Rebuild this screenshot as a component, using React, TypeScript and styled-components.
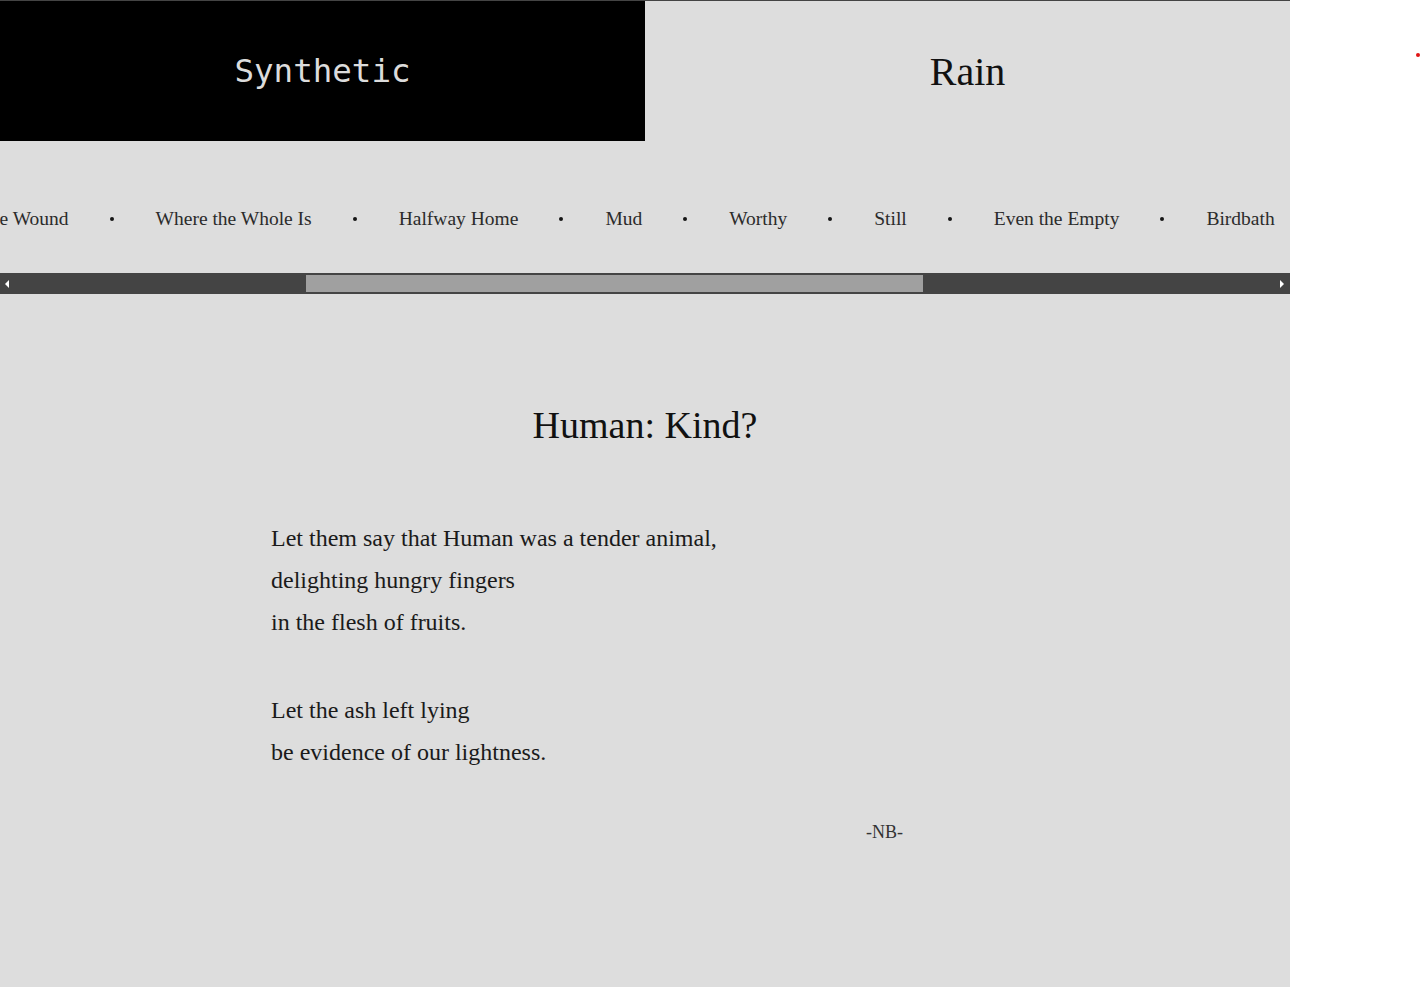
import React, { useLayoutEffect, useRef, useState } from "react";
import styled, { createGlobalStyle } from "styled-components";

const GlobalStyle = createGlobalStyle`
  html, body { margin: 0; padding: 0; background: #fff; }
  body { font-family: "Liberation Serif", "Times New Roman", serif; }
`;

const Shell = styled.div`
  display: flex;
  min-height: 100vh;
`;

const Page = styled.div`
  width: 1290px;
  flex: none;
  background: #dddddd;
  min-height: 987px;
  display: flex;
  flex-direction: column;
`;

const Aside = styled.aside`
  flex: 1;
  padding: 53px 0 0 126px;
`;

const RecDot = styled.span`
  display: block;
  width: 4px;
  height: 4px;
  border-radius: 50%;
  background: #e01414;
`;

const Header = styled.header`
  display: grid;
  grid-template-columns: 645px 645px;
  border-top: 1px solid #444;
`;

const Brand = styled.div<{ $dark?: boolean }>`
  height: 140px;
  display: flex;
  align-items: center;
  justify-content: center;
  background: ${(p) => (p.$dark ? "#000" : "transparent")};
`;

const BrandMono = styled.span`
  font-family: "DejaVu Sans Mono", "Liberation Mono", monospace;
  font-size: 32.5px;
  color: #dcdcdc;
`;

const BrandSerif = styled.span`
  font-family: "Liberation Serif", serif;
  font-size: 40px;
  color: #111;
`;

const NavScroller = styled.nav`
  overflow-x: auto;
  overflow-y: hidden;
  scrollbar-width: none;
  &::-webkit-scrollbar {
    display: none;
  }
`;

const NavList = styled.ul`
  display: flex;
  align-items: center;
  box-sizing: border-box;
  width: 2647px;
  margin: 0;
  padding: 66px 30px 42px 24px;
  list-style: none;
  white-space: nowrap;
`;

const NavItem = styled.li`
  display: flex;
  align-items: center;
  font-size: 19.5px;
  line-height: 24px;
  color: #2b2b2b;

  & + &::before {
    content: "";
    width: 4px;
    height: 4px;
    border-radius: 50%;
    background: #151515;
    margin: 0 42px 0 41px;
  }
`;

const NavLink = styled.a`
  color: inherit;
  text-decoration: none;
`;

const ScrollTrack = styled.div`
  display: flex;
  height: 21px;
  background: #444;
`;

const ScrollArrow = styled.button<{ $dir: "left" | "right" }>`
  width: 12px;
  flex: none;
  border: 0;
  margin: 0;
  background: transparent;
  display: flex;
  align-items: center;
  justify-content: flex-start;
  padding: 0 0 0 ${(p) => (p.$dir === "left" ? "5px" : "2px")};
  cursor: default;

  &::after {
    content: "";
    width: 0;
    height: 0;
    border-top: 4px solid transparent;
    border-bottom: 4px solid transparent;
    ${(p) =>
      p.$dir === "left"
        ? "border-right: 4px solid #fff;"
        : "border-left: 4px solid #fff;"}
  }
`;

const ScrollRail = styled.div`
  flex: 1;
  display: flex;
  padding: 2px 0;
`;

const ScrollThumb = styled.div`
  flex: none;
  height: 100%;
  background: #a0a0a0;
`;

const Main = styled.main`
  padding: 108px 0 120px;
`;

const Title = styled.h1`
  margin: 0;
  text-align: center;
  font-weight: 400;
  font-size: 38px;
  line-height: 46px;
  color: #111;
`;

const Poem = styled.div`
  width: 748px;
  margin: 69px auto 0;
`;

const Stanza = styled.p`
  margin: 0;
  font-size: 24px;
  line-height: 42px;
  color: #1a1a1a;

  & + & {
    margin-top: 46px;
  }
`;

const Line = styled.span`
  display: block;
`;

const Signature = styled.p`
  margin: 47px 0 0;
  padding-left: 595px;
  font-size: 18px;
  line-height: 24px;
  color: #333;
`;

const titles = [
  "Ember",
  "Salt Lines",
  "Human: Kind?",
  "Tending the Wound",
  "Where the Whole Is",
  "Halfway Home",
  "Mud",
  "Worthy",
  "Still",
  "Even the Empty",
  "Birdbath",
  "Low Tide",
  "Afterglow",
  "What Remains",
  "Small Hours",
];

const stanzas = [
  [
    "Let them say that Human was a tender animal,",
    "delighting hungry fingers",
    "in the flesh of fruits.",
  ],
  ["Let the ash left lying", "be evidence of our lightness."],
];

const RAIL = 1290 - 24;

export default function App() {
  const scrollerRef = useRef<HTMLElement>(null);
  const anchorRef = useRef<HTMLAnchorElement>(null);
  const [thumb, setThumb] = useState({ left: 294, width: 617 });

  const measure = () => {
    const sc = scrollerRef.current;
    if (!sc) return;
    setThumb({
      left: (sc.scrollLeft / sc.scrollWidth) * RAIL,
      width: (sc.clientWidth / sc.scrollWidth) * RAIL,
    });
  };

  useLayoutEffect(() => {
    const sc = scrollerRef.current;
    const an = anchorRef.current;
    if (!sc || !an) return;
    const offset =
      an.getBoundingClientRect().left - sc.getBoundingClientRect().left + sc.scrollLeft;
    sc.scrollLeft = offset - 156;
    measure();
  }, []);

  const nudge = (d: number) => {
    const sc = scrollerRef.current;
    if (sc) sc.scrollLeft += d;
  };

  return (
    <>
      <GlobalStyle />
      <Shell>
        <Page>
          <Header>
            <Brand $dark>
              <BrandMono>Synthetic</BrandMono>
            </Brand>
            <Brand>
              <BrandSerif>Rain</BrandSerif>
            </Brand>
          </Header>
          <NavScroller ref={scrollerRef} onScroll={measure}>
            <NavList>
              {titles.map((t) => (
                <NavItem key={t}>
                  <NavLink
                    href="#"
                    ref={t === "Where the Whole Is" ? anchorRef : undefined}
                  >
                    {t}
                  </NavLink>
                </NavItem>
              ))}
            </NavList>
          </NavScroller>
          <ScrollTrack>
            <ScrollArrow $dir="left" aria-label="Scroll left" onClick={() => nudge(-80)} />
            <ScrollRail>
              <ScrollThumb style={{ marginLeft: thumb.left, width: thumb.width }} />
            </ScrollRail>
            <ScrollArrow $dir="right" aria-label="Scroll right" onClick={() => nudge(80)} />
          </ScrollTrack>
          <Main>
            <Title>Human: Kind?</Title>
            <Poem>
              {stanzas.map((s, i) => (
                <Stanza key={i}>
                  {s.map((l) => (
                    <Line key={l}>{l}</Line>
                  ))}
                </Stanza>
              ))}
              <Signature>-NB-</Signature>
            </Poem>
          </Main>
        </Page>
        <Aside>
          <RecDot />
        </Aside>
      </Shell>
    </>
  );
}
